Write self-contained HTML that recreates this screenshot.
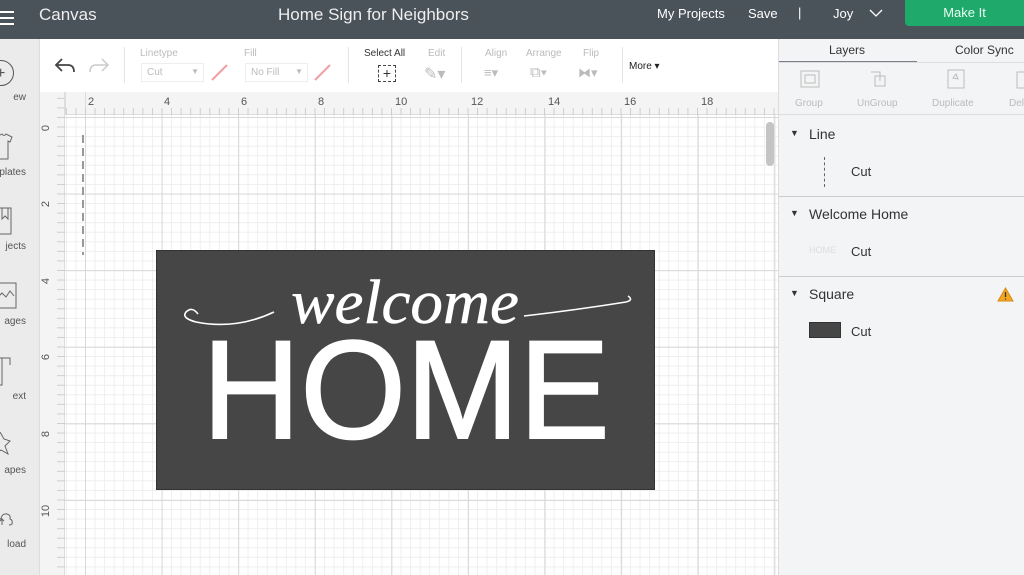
<!DOCTYPE html>
<html><head><meta charset="utf-8"><style>
*{margin:0;padding:0;box-sizing:border-box}
body{width:1024px;height:575px;overflow:hidden;position:relative;font-family:"Liberation Sans",sans-serif;background:#fff}
.a{position:absolute}
.top{left:0;top:0;width:1024px;height:39px;background:#4a525a;color:#fff}
.side{left:0;top:39px;width:40px;height:536px;background:#ebebec;border-right:1px solid #ddd}
.side span{position:absolute;font-size:10px;color:#555;right:13px}
.tb{left:40px;top:39px;width:738px;height:53px;background:#fff}
.lbl{position:absolute;font-size:10px;color:#bbb}
.rt{left:65px;top:92px;width:713px;height:23px;background:#f4f4f4;border-bottom:1px solid #ddd}
.rl{left:40px;top:92px;width:25px;height:483px;background:#f4f4f4;border-right:1px solid #ddd}
.grid{left:65px;top:115px;width:713px;height:460px;background-color:#fff;
background-image:linear-gradient(to right,#d8d8d8 1px,transparent 1px),linear-gradient(to bottom,#d8d8d8 1px,transparent 1px),linear-gradient(to right,#eeeeee 1px,transparent 1px),linear-gradient(to bottom,#eeeeee 1px,transparent 1px);
background-size:76.6px 76.6px,76.6px 76.6px,9.575px 9.575px,9.575px 9.575px;
background-position:20px 2px,20px 2px,20px 2px,20px 2px}
.rp{left:778px;top:39px;width:246px;height:536px;background:#f3f4f5;border-left:1px solid #ddd}
.rp .t{position:absolute;font-size:13px;color:#333}
.sep{position:absolute;left:0;width:246px;height:1px;background:#ccc}
</style></head><body>
<div class="a top">
  <div class="a" style="left:0;top:11px;width:14px;height:2px;background:#fff;box-shadow:0 6px 0 #fff,0 12px 0 #fff"></div>
  <div class="a" style="left:39px;top:5px;font-size:17px;color:#eee">Canvas</div>
  <div class="a" style="left:278px;top:5px;font-size:17px;color:#eee">Home Sign for Neighbors</div>
  <div class="a" style="left:657px;top:6px;font-size:13px">My Projects</div>
  <div class="a" style="left:748px;top:6px;font-size:13px">Save</div>
  <div class="a" style="left:798px;top:5px;font-size:13px">|</div>
  <div class="a" style="left:833px;top:6px;font-size:13px">Joy</div>
  <svg class="a" style="left:869px;top:9px" width="14" height="9"><path d="M1 1 L7 7 L13 1" stroke="#fff" fill="none" stroke-width="1.3"/></svg>
  <div class="a" style="left:905px;top:0;width:119px;height:26px;background:#1faa6b;border-radius:0 0 0 4px;font-size:13px;text-align:center;line-height:25px;color:#e8fff2">Make It</div>
</div>
<div class="a side">
  <div class="a" style="left:-12px;top:21px;width:26px;height:26px;border:1.5px solid #555;border-radius:50%"></div>
  <div class="a" style="left:-4px;top:26px;font-size:16px;color:#555">+</div>
  <span style="top:53px">ew</span>
  <svg class="a" style="left:-6px;top:94px" width="24" height="28"><path d="M2 4 L8 1 Q10 4 12 1 L18 4 L16 9 L14 8 L14 26 L0 26" stroke="#666" fill="none"/></svg>
  <span style="top:128px">plates</span>
  <svg class="a" style="left:-2px;top:168px" width="16" height="28"><rect x="1" y="1" width="12" height="26" fill="none" stroke="#666"/><path d="M4 1 L4 12 L7 9 L10 12 L10 1" stroke="#666" fill="none"/></svg>
  <span style="top:202px">jects</span>
  <svg class="a" style="left:-4px;top:243px" width="22" height="27"><rect x="1" y="1" width="19" height="25" fill="none" stroke="#666"/><path d="M1 16 L6 11 L10 15 L14 9 L18 14" stroke="#666" fill="none"/></svg>
  <span style="top:277px">ages</span>
  <svg class="a" style="left:-4px;top:318px" width="18" height="30"><path d="M1 1 L14 1 L14 8 M6 1 L6 28 L1 28" stroke="#666" fill="none"/></svg>
  <span style="top:352px">ext</span>
  <svg class="a" style="left:-4px;top:392px" width="18" height="30"><path d="M4 1 L8 8 L14 10 L9 15 L12 23 L5 19 L1 22" stroke="#666" fill="none"/></svg>
  <span style="top:426px">apes</span>
  <svg class="a" style="left:-4px;top:470px" width="20" height="20"><path d="M3 16 Q0 16 1 12 Q2 9 5 10 Q6 4 11 5 Q15 6 14 10 Q17 11 16 15 Q15 16 13 16 M6 10 L6 16 M4 12 L6 10 L8 12" stroke="#666" fill="none"/></svg>
  <span style="top:500px">load</span>
</div>
<div class="a tb">
  <svg class="a" style="left:14px;top:17px" width="22" height="18"><path d="M8 3 L2 9 L8 15 M2 9 L14 9 Q20 9 20 16" stroke="#444" fill="none" stroke-width="1.8"/></svg>
  <svg class="a" style="left:48px;top:17px" width="22" height="18"><path d="M14 3 L20 9 L14 15 M20 9 L8 9 Q2 9 2 16" stroke="#ccc" fill="none" stroke-width="1.5"/></svg>
  <div class="a" style="left:84px;top:8px;width:1px;height:36px;background:#e5e5e5"></div>
  <div class="lbl" style="left:100px;top:9px">Linetype</div>
  <div class="a" style="left:101px;top:24px;width:63px;height:19px;border:1px solid #eee;font-size:10px;color:#bbb;padding:3px 5px">Cut<span style="position:absolute;right:4px;font-size:8px">▼</span></div>
  <svg class="a" style="left:170px;top:24px" width="19" height="19"><path d="M2 17 L17 2" stroke="#f0a0a4" stroke-width="2"/></svg>
  <div class="lbl" style="left:204px;top:9px">Fill</div>
  <div class="a" style="left:205px;top:24px;width:63px;height:19px;border:1px solid #eee;font-size:10px;color:#bbb;padding:3px 5px">No Fill<span style="position:absolute;right:4px;font-size:8px">▼</span></div>
  <svg class="a" style="left:273px;top:24px" width="19" height="19"><path d="M2 17 L17 2" stroke="#f0a0a4" stroke-width="2"/></svg>
  <div class="a" style="left:308px;top:8px;width:1px;height:36px;background:#e5e5e5"></div>
  <div class="a" style="left:324px;top:9px;font-size:10px;color:#333">Select All</div>
  <div class="a" style="left:338px;top:26px;width:18px;height:17px;border:1px dashed #444;font-size:14px;line-height:14px;text-align:center;color:#333">+</div>
  <div class="lbl" style="left:388px;top:9px">Edit</div>
  <div class="lbl" style="left:384px;top:25px;font-size:16px">✎▾</div>
  <div class="a" style="left:421px;top:8px;width:1px;height:36px;background:#e5e5e5"></div>
  <div class="lbl" style="left:445px;top:9px">Align</div>
  <div class="lbl" style="left:444px;top:26px;font-size:13px">≡▾</div>
  <div class="lbl" style="left:486px;top:9px">Arrange</div>
  <div class="lbl" style="left:490px;top:25px;font-size:15px">⧉▾</div>
  <div class="lbl" style="left:543px;top:9px">Flip</div>
  <div class="lbl" style="left:538px;top:26px;font-size:13px">⧓▾</div>
  <div class="a" style="left:582px;top:8px;width:1px;height:36px;background:#e5e5e5"></div>
  <div class="a" style="left:589px;top:22px;font-size:10px;color:#222">More ▾</div>
</div>
<div class="a rt">
  <div class="a" style="left:0;top:0;width:1px;height:23px;background:#ddd"></div>
  <div class="a" style="left:20px;top:0;width:1px;height:23px;background:#ddd"></div>
  <div class="a" style="left:0;top:16px;width:713px;height:7px;background-image:linear-gradient(to right,#ccc 1px,transparent 1px);background-size:9.575px 7px;background-position:20px 0"></div>
  <div class="a" style="left:23px;top:4px;font-size:11px;color:#555">2</div>
  <div class="a" style="left:99px;top:4px;font-size:11px;color:#555">4</div>
  <div class="a" style="left:176px;top:4px;font-size:11px;color:#555">6</div>
  <div class="a" style="left:253px;top:4px;font-size:11px;color:#555">8</div>
  <div class="a" style="left:330px;top:4px;font-size:11px;color:#555">10</div>
  <div class="a" style="left:406px;top:4px;font-size:11px;color:#555">12</div>
  <div class="a" style="left:483px;top:4px;font-size:11px;color:#555">14</div>
  <div class="a" style="left:559px;top:4px;font-size:11px;color:#555">16</div>
  <div class="a" style="left:636px;top:4px;font-size:11px;color:#555">18</div>
</div>
<div class="a rl">
  <div class="a" style="left:17px;top:0;width:8px;height:483px;background-image:linear-gradient(to bottom,#ccc 1px,transparent 1px);background-size:8px 9.575px;background-position:0 25px"></div>
  <div class="a" style="left:3px;top:30px;font-size:11px;color:#555;transform:rotate(-90deg)">0</div>
  <div class="a" style="left:3px;top:106px;font-size:11px;color:#555;transform:rotate(-90deg)">2</div>
  <div class="a" style="left:3px;top:183px;font-size:11px;color:#555;transform:rotate(-90deg)">4</div>
  <div class="a" style="left:3px;top:259px;font-size:11px;color:#555;transform:rotate(-90deg)">6</div>
  <div class="a" style="left:3px;top:336px;font-size:11px;color:#555;transform:rotate(-90deg)">8</div>
  <div class="a" style="left:0px;top:413px;font-size:11px;color:#555;transform:rotate(-90deg)">10</div>
</div>
<div class="a grid"></div>
<div class="a" style="left:82px;top:135px;width:2px;height:120px;background-image:linear-gradient(to bottom,#999 8px,transparent 8px);background-size:2px 13px"></div>
<div class="a" style="left:766px;top:122px;width:8px;height:44px;background:#c4c4c4;border-radius:4px"></div>
<div class="a" style="left:156px;top:250px;width:499px;height:240px;background:#464646;border:1px solid #333"></div>
<svg class="a" style="left:156px;top:250px" width="499" height="240"><path d="M118 62 Q80 80 40 72 Q25 68 30 62 Q36 56 42 64" stroke="#fff" fill="none" stroke-width="1.6"/><path d="M368 66 Q420 60 470 52 Q478 50 472 46" stroke="#fff" fill="none" stroke-width="1.6"/></svg>
<div class="a" style="left:250px;top:272px;width:310px;font-family:'Liberation Serif',serif;font-style:italic;font-size:62px;line-height:62px;color:#fff;text-align:center;transform:scaleX(1.05);-webkit-text-stroke:0.5px #fff">welcome</div>
<div class="a" style="left:146px;top:320px;width:520px;font-size:140px;line-height:140px;color:#fff;text-align:center;transform:scaleX(0.97);transform-origin:center;-webkit-text-stroke:2px #fff">HOME</div>
<div class="a rp">
  <div class="t" style="left:50px;top:4px;font-size:12px">Layers</div>
  <div class="t" style="left:176px;top:4px;font-size:12px">Color Sync</div>
  <div class="a" style="left:0;top:22px;width:138px;height:2px;background:#7a8088"></div>
  <div class="a" style="left:0;top:23px;width:246px;height:1px;background:#ddd"></div>
  <svg class="a" style="left:20px;top:30px" width="22" height="20"><rect x="2" y="2" width="18" height="16" fill="none" stroke="#bbb"/><rect x="6" y="6" width="10" height="8" fill="none" stroke="#bbb"/></svg>
  <svg class="a" style="left:89px;top:30px" width="22" height="20"><path d="M3 3 H12 V12 M7 7 H17 V17 H7 Z" fill="none" stroke="#bbb"/></svg>
  <svg class="a" style="left:166px;top:30px" width="22" height="20"><rect x="3" y="1" width="16" height="18" fill="none" stroke="#bbb"/><path d="M11 5 L13 10 L8 9 Z" fill="none" stroke="#bbb"/></svg>
  <svg class="a" style="left:237px;top:30px" width="12" height="20"><rect x="1" y="3" width="10" height="16" fill="none" stroke="#bbb"/></svg>
  <div class="t" style="left:16px;top:59px;font-size:10px;color:#bbb">Group</div>
  <div class="t" style="left:78px;top:59px;font-size:10px;color:#bbb">UnGroup</div>
  <div class="t" style="left:153px;top:59px;font-size:10px;color:#bbb">Duplicate</div>
  <div class="t" style="left:230px;top:59px;font-size:10px;color:#bbb">Del</div>
  <div class="sep" style="top:75px;background:#ddd"></div>
  <div class="t" style="left:11px;top:89px;font-size:9px">▼</div><div class="t" style="left:30px;top:87px;font-size:14px">Line</div>
  <div class="a" style="left:45px;top:118px;width:1px;height:30px;border-left:1px dashed #666"></div>
  <div class="t" style="left:72px;top:125px">Cut</div>
  <div class="sep" style="top:157px"></div>
  <div class="t" style="left:11px;top:169px;font-size:9px">▼</div><div class="t" style="left:30px;top:167px;font-size:14px">Welcome Home</div>
  <div class="t" style="left:30px;top:206px;font-size:9px;color:#ddd">HOME</div>
  <div class="t" style="left:72px;top:205px">Cut</div>
  <div class="sep" style="top:237px"></div>
  <div class="t" style="left:11px;top:249px;font-size:9px">▼</div><div class="t" style="left:30px;top:247px;font-size:14px">Square</div>
  <svg class="a" style="left:218px;top:248px" width="17" height="15"><path d="M8.5 1 L16 14 L1 14 Z" fill="#f3a623" stroke="#d88a10"/><path d="M8.5 5 V10 M8.5 11.5 V12.5" stroke="#333" stroke-width="1.3"/></svg>
  <div class="a" style="left:30px;top:283px;width:32px;height:16px;background:#464646;border:1px solid #333"></div>
  <div class="t" style="left:72px;top:285px">Cut</div>
</div>
</body></html>
